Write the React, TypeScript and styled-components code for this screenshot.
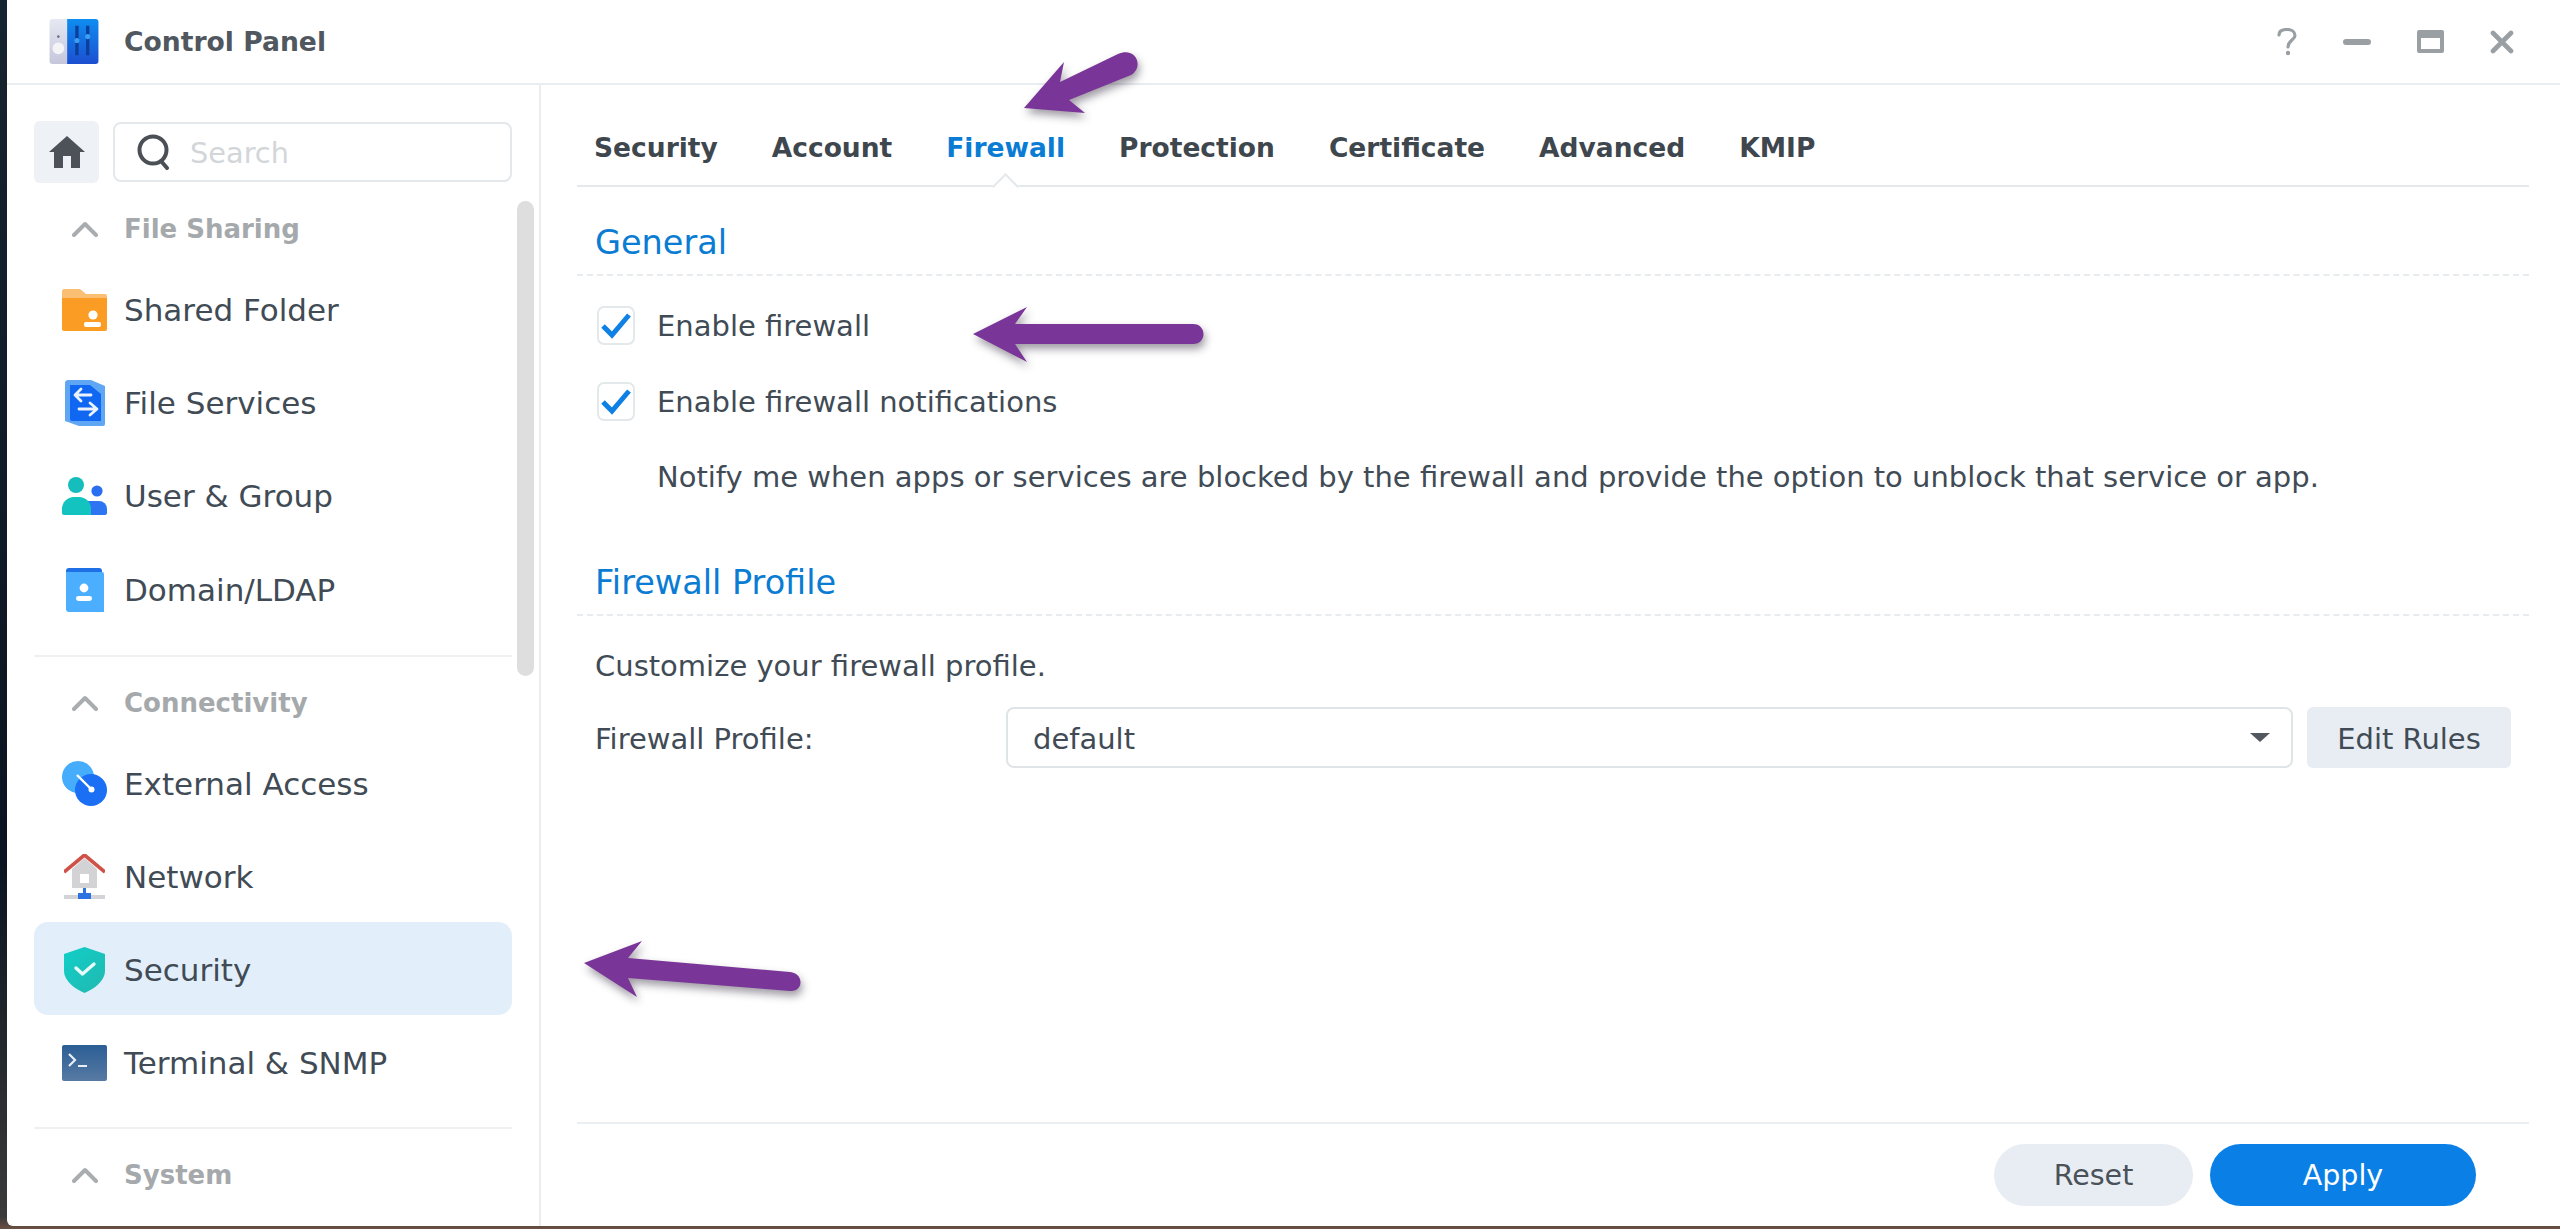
import React from 'react';
import styled, { createGlobalStyle } from 'styled-components';

const Global = createGlobalStyle`
  html, body { margin: 0; padding: 0; height: 100%; background: #0e1a26; overflow: hidden; }
  * { box-sizing: border-box; }
  #root { height: 100%; }
`;

const Desktop = styled.div`
  position: relative;
  width: 2560px;
  height: 1229px;
  overflow: hidden;
  padding: 0 0 3px 7px;
  background: linear-gradient(180deg, #16242f 0%, #0a1420 70%, #3a3a3a 99%, #6b5142 100%);
  font-family: "DejaVu Sans", "Noto Sans", sans-serif;
  color: #414b55;
`;

const Window = styled.div`
  width: 2553px;
  height: 1226px;
  background: #fff;
  border-bottom-left-radius: 6px;
  display: flex;
  flex-direction: column;
  overflow: hidden;
`;

const TitleBar = styled.header`
  flex: 0 0 85px;
  height: 85px;
  display: flex;
  align-items: center;
  padding-left: 42px;
  border-bottom: 2px solid #e9edef;
`;

const AppName = styled.h1`
  margin: 0 0 0 25px;
  font-size: 26.6px;
  font-weight: 700;
  color: #50575e;
  flex: 1;
`;

const Controls = styled.div`
  display: flex;
  align-items: center;
  gap: 46px;
  padding-right: 46px;
`;

const Body = styled.div`
  flex: 1;
  display: flex;
  min-height: 0;
`;

const Sidebar = styled.aside`
  position: relative;
  flex: 0 0 534px;
  border-right: 2px solid #e9edef;
  padding: 36px 27px 0 27px;
  overflow: hidden;
`;

const SearchRow = styled.div`
  display: flex;
  gap: 14px;
  height: 62px;
`;

const HomeButton = styled.button`
  width: 65px;
  height: 62px;
  border: 0;
  padding: 0;
  border-radius: 6px;
  background: #eef1f6;
  display: flex;
  align-items: center;
  justify-content: center;
`;

const SearchBox = styled.div`
  flex: 1;
  height: 60px;
  margin-top: 1px;
  border: 2px solid #e4e8ea;
  border-radius: 8px;
  display: flex;
  align-items: center;
  padding-left: 22px;
  gap: 19px;
`;

const Placeholder = styled.span`
  padding-top: 1px;
  font-size: 28.8px;
  color: #d3d6d9;
`;

const ScrollThumb = styled.div`
  position: absolute;
  left: 510px;
  top: 116px;
  width: 17px;
  height: 475px;
  border-radius: 9px;
  background: #dedede;
`;

const SectionHeader = styled.div<{ $after: number }>`
  display: flex;
  align-items: center;
  height: 90px;
  padding-top: 2px;
  margin-bottom: ${p => p.$after}px;
  font-size: 26px;
  font-weight: 700;
  color: #a5a9ac;
`;

const Chevron = styled.span`
  width: 26px;
  margin-left: 38px;
  margin-right: 26px;
  display: flex;
  justify-content: center;
`;

const Row = styled.div<{ $active?: boolean }>`
  height: 93.2px;
  display: flex;
  align-items: center;
  padding: 3px 0 0 28px;
  gap: 17px;
  border-radius: 14px;
  background: ${p => (p.$active ? '#e2effb' : 'transparent')};
  font-size: 31px;
  color: #414b55;
`;

const IconSlot = styled.span`
  flex: 0 0 45px;
  width: 45px;
  height: 45px;
  display: flex;
  align-items: center;
  justify-content: center;
`;

const SectionRule = styled.hr<{ $gap: number }>`
  margin: ${p => p.$gap}px 0 0;
  border: 0;
  border-top: 2px solid #eef0f2;
`;

const Main = styled.main`
  flex: 1;
  display: flex;
  flex-direction: column;
  padding: 0 31px 0 36px;
  min-width: 0;
`;

const Tabs = styled.nav`
  display: flex;
  gap: 54px;
  flex: 0 0 102px;
  padding: 24px 0 0 17px;
  border-bottom: 2px solid #e4e9ec;
`;

const Tab = styled.span<{ $active?: boolean }>`
  position: relative;
  display: flex;
  align-items: center;
  font-size: 26.5px;
  font-weight: 700;
  color: ${p => (p.$active ? '#0a7cd3' : '#3f474e')};
`;

const Notch = styled.i`
  position: absolute;
  left: 50%;
  bottom: -10.5px;
  width: 19px;
  height: 19px;
  margin-left: -9.5px;
  transform: rotate(45deg);
  background: #fff;
  border-left: 2px solid #e4e9ec;
  border-top: 2px solid #e4e9ec;
`;

const SectionTitle = styled.h2`
  margin: 0;
  flex: 0 0 89px;
  display: flex;
  align-items: flex-end;
  padding: 0 0 4px 18px;
  font-size: 33.5px;
  line-height: 54px;
  font-weight: 400;
  color: #0a7cd3;
  border-bottom: 2px dashed #e8ecee;
`;

const Check = styled.label<{ $top: number }>`
  display: flex;
  align-items: center;
  gap: 22px;
  height: 39px;
  margin: ${p => p.$top}px 0 0 20px;
  font-size: 29px;
  color: #414b55;
`;

const Box = styled.span`
  flex: 0 0 38px;
  width: 38px;
  height: 39px;
  border: 2px solid #e3e8ea;
  border-radius: 7px;
  display: flex;
  align-items: center;
  justify-content: center;
`;

const Hint = styled.p`
  margin: 37px 0 31px 80px;
  line-height: 38px;
  font-size: 29px;
  color: #414b55;
`;

const Plain = styled.p`
  margin: 31px 0 0 18px;
  line-height: 38px;
  font-size: 29px;
  color: #414b55;
`;

const ProfileRow = styled.div`
  display: flex;
  align-items: center;
  height: 61px;
  margin: 22px 18px 0 18px;
  gap: 14px;
  font-size: 29px;
`;

const ProfileLabel = styled.span`
  flex: 0 0 397px;
  padding-top: 3px;
  color: #414b55;
`;

const Select = styled.div`
  flex: 1;
  height: 61px;
  border: 2px solid #dfe5e7;
  border-radius: 8px;
  padding: 3px 26px 0 25px;
  display: flex;
  align-items: center;
  justify-content: space-between;
`;

const Caret = styled.i`
  width: 0;
  height: 0;
  margin: -3px -5px 0 0;
  border-left: 10px solid transparent;
  border-right: 10px solid transparent;
  border-top: 9px solid #53585f;
`;

const EditButton = styled.button`
  flex: 0 0 204px;
  height: 61px;
  border: 0;
  border-radius: 6px;
  padding: 3px 0 0;
  background: #e8edf3;
  font: inherit;
  color: #414b55;
`;

const Spacer = styled.div`
  flex: 1;
`;

const Footer = styled.footer`
  flex: 0 0 104px;
  display: flex;
  justify-content: flex-end;
  gap: 17px;
  padding: 20px 53px 0 0;
  border-top: 2px solid #eceff1;
`;

const Pill = styled.button<{ $primary?: boolean }>`
  height: 62px;
  width: ${p => (p.$primary ? '266px' : '199px')};
  border: 0;
  border-radius: 31px;
  background: ${p => (p.$primary ? '#0a7fe6' : '#e8edf3')};
  color: ${p => (p.$primary ? '#fff' : '#4a5159')};
  font-family: inherit;
  font-size: 28.5px;
`;

const ArrowSvg = styled.svg<{ $x: number; $y: number }>`
  position: absolute;
  left: ${p => p.$x}px;
  top: ${p => p.$y}px;
  pointer-events: none;
  overflow: visible;
  filter: drop-shadow(2px 5px 4px rgba(40, 30, 50, 0.45));
`;

const ChevronIcon = () => (
  <svg width="26" height="16" viewBox="0 0 26 16" fill="none" stroke="#a9adb0" strokeWidth="4" strokeLinecap="round" strokeLinejoin="round">
    <path d="M2 14 L13 3 L24 14" />
  </svg>
);

const LogoIcon = () => (
  <svg width="50" height="45" viewBox="0 0 50 46">
    <defs>
      <linearGradient id="lg1" x1="0" y1="0" x2="0" y2="1"><stop offset="0" stopColor="#e6e8f2" /><stop offset="1" stopColor="#c6c6dc" /></linearGradient>
      <linearGradient id="lg2" x1="0" y1="0" x2="0" y2="1"><stop offset="0" stopColor="#0f8df0" /><stop offset="1" stopColor="#1c4fd0" /></linearGradient>
    </defs>
    <path d="M3 0 H18 V46 H3 a3 3 0 0 1 -3 -3 V3 a3 3 0 0 1 3 -3z" fill="url(#lg1)" />
    <path d="M18 0 H47 a3 3 0 0 1 3 3 V43 a3 3 0 0 1 -3 3 H18z" fill="url(#lg2)" />
    <circle cx="9" cy="18" r="1.3" fill="#6a6f86" />
    <circle cx="9" cy="30" r="6" fill="#f3f3f8" />
    <path d="M28 7 V37 M39 7 V37" stroke="#0c3f9c" strokeWidth="3.4" />
    <circle cx="28" cy="22" r="2.6" fill="#3aa0f0" />
    <circle cx="39" cy="18" r="2.6" fill="#3aa0f0" />
  </svg>
);

const HomeIcon = () => (
  <svg width="36" height="32" viewBox="0 0 36 32" fill="#4c5258">
    <path d="M18 0 L36 16 H31 V32 H5 V16 H0z" />
    <rect x="14" y="20" width="8" height="12" fill="#eef1f6" />
  </svg>
);

const SearchIcon = () => (
  <svg width="34" height="36" viewBox="0 0 34 36" fill="none" stroke="#4a5056" strokeWidth="4" strokeLinecap="round">
    <circle cx="16" cy="16" r="13.5" />
    <path d="M24 27 L30 34" />
  </svg>
);

const FolderIcon = () => (
  <svg width="45" height="42" viewBox="0 0 45 42">
    <path d="M0 2 a2 2 0 0 1 2 -2 H18 L24 5 H43 a2 2 0 0 1 2 2 V12 H0z" fill="#fbbf73" />
    <path d="M0 9 H45 V40 a2 2 0 0 1 -2 2 H2 a2 2 0 0 1 -2 -2z" fill="#fb9d24" />
    <circle cx="31" cy="26" r="4.6" fill="#fff" />
    <rect x="22" y="33" width="17" height="5" rx="2" fill="#fff" />
  </svg>
);

const FileServicesIcon = () => (
  <svg width="40" height="46" viewBox="0 0 40 46">
    <path d="M2 0 H26 L40 6 V44 a2 2 0 0 1 -2 2 H14 L0 41 V2z" fill="#5fa7f5" />
    <path d="M5 5 H25 L36 14 V41 H7 a2 2 0 0 1 -2 -2z" fill="#1067f2" />
    <path d="M26 15 H11 M16 9 L10 15 L16 21 M14 29 H31 M25 23 L32 29 L25 35" stroke="#eaf3ff" strokeWidth="2.8" fill="none" strokeLinecap="round" strokeLinejoin="round" />
  </svg>
);

const UsersIcon = () => (
  <svg width="45" height="38" viewBox="0 0 45 38">
    <circle cx="35" cy="14" r="5.6" fill="#2b6ff0" />
    <path d="M26 24 h11 a8 8 0 0 1 8 8 v4 a2 2 0 0 1 -2 2 H26z" fill="#2d74f2" />
    <circle cx="14" cy="8" r="8" fill="#15bdbd" />
    <path d="M0 36 v-4 a12 12 0 0 1 12 -12 h5 a12 12 0 0 1 12 12 v6 H2 a2 2 0 0 1 -2 -2z" fill="#12c3bf" />
  </svg>
);

const DomainIcon = () => (
  <svg width="38" height="44" viewBox="0 0 38 44">
    <path d="M0 3 a3 3 0 0 1 3 -3 H33 a3 3 0 0 1 3 3 V6 H0z" fill="#1f6fe6" />
    <path d="M0 4 H36 a2 2 0 0 1 2 2 V44 H3 a3 3 0 0 1 -3 -3z" fill="#4caeff" />
    <circle cx="18" cy="20" r="4.4" fill="#fff" />
    <rect x="10" y="28" width="16" height="5" rx="2.4" fill="#fff" />
  </svg>
);

const ExternalIcon = () => (
  <svg width="45" height="45" viewBox="0 0 45 45">
    <circle cx="16" cy="16" r="16" fill="#45adfb" />
    <circle cx="29" cy="29" r="16" fill="#1a6ff4" />
    <path d="M15 14 L29 28" stroke="#fff" strokeWidth="2.4" />
    <circle cx="29.5" cy="28.5" r="3" fill="#fff" />
  </svg>
);

const NetworkIcon = () => (
  <svg width="41" height="46" viewBox="0 0 41 46">
    <path d="M8 15 L20.5 4 L33 15 V34 H8z" fill="#d3d3d5" />
    <path d="M0 18 L20.5 1 L41 18" fill="none" stroke="#cf5148" strokeWidth="3.6" />
    <rect x="16" y="20" width="9" height="9" fill="#fff" />
    <rect x="0" y="41" width="41" height="4" fill="#d3d4d8" />
    <path d="M19 34 H22 V39 H27 V45 H14 V39 H19z" fill="#2c72e0" />
  </svg>
);

const ShieldIcon = () => (
  <svg width="41" height="46" viewBox="0 0 41 46">
    <defs>
      <linearGradient id="sg" x1="0" y1="0" x2="1" y2="1"><stop offset="0" stopColor="#10cfc8" /><stop offset="1" stopColor="#22b8b0" /></linearGradient>
    </defs>
    <path d="M20.5 0 L41 7 V24 C41 34 30 42 20.5 46 C11 42 0 34 0 24 V7z" fill="url(#sg)" />
    <path d="M12 21 L18.5 27 L30 17" fill="none" stroke="#e8fafa" strokeWidth="3.4" strokeLinecap="round" strokeLinejoin="round" />
  </svg>
);

const TerminalIcon = () => (
  <svg width="45" height="36" viewBox="0 0 45 36">
    <defs>
      <linearGradient id="tg" x1="0" y1="0" x2="0" y2="1"><stop offset="0" stopColor="#2b5e95" /><stop offset="1" stopColor="#587aa3" /></linearGradient>
    </defs>
    <rect width="45" height="36" rx="2" fill="url(#tg)" />
    <path d="M7 9 L13 15 L7 21 M16 21 H25" fill="none" stroke="#e8eef5" strokeWidth="2.2" />
  </svg>
);

const QuestionIcon = () => (
  <svg width="20" height="28" viewBox="0 0 20 28" fill="none">
    <path d="M2 7 C2 3 5 1.5 10 1.5 C15 1.5 18 4 18 7.5 C18 12 11 12.5 11 19" stroke="#9a9fa3" strokeWidth="3.2" strokeLinecap="round" />
    <circle cx="11" cy="25" r="2.2" fill="#9a9fa3" />
  </svg>
);

const MinimizeIcon = () => (
  <svg width="28" height="6" viewBox="0 0 28 6"><rect width="28" height="6" rx="3" fill="#9a9fa3" /></svg>
);

const MaximizeIcon = () => (
  <svg width="27" height="23" viewBox="0 0 27 23">
    <rect width="27" height="23" rx="2" fill="#9a9fa3" />
    <rect x="4" y="8" width="19" height="11" fill="#fff" />
  </svg>
);

const CloseIcon = () => (
  <svg width="24" height="24" viewBox="0 0 24 24" stroke="#9a9fa3" strokeWidth="4.6" strokeLinecap="round">
    <path d="M3 3 L21 21 M21 3 L3 21" />
  </svg>
);

const CheckMark = () => (
  <svg width="32" height="28" viewBox="0 0 32 28" fill="none" stroke="#0f80e4" strokeWidth="5" strokeLinejoin="miter">
    <path d="M3 14 L12 23 L29 3" />
  </svg>
);

const Arrow = ({ d, x, y, w, h }: { d: string; x: number; y: number; w: number; h: number }) => (
  <ArrowSvg $x={x} $y={y} width={w} height={h} viewBox={`0 0 ${w} ${h}`}>
    <path d={d} fill="#7a3598" />
  </ArrowSvg>
);

const sections = [
  {
    title: 'File Sharing',
    after: -11,
    ruleGap: 20,
    items: [
      { label: 'Shared Folder', icon: <FolderIcon /> },
      { label: 'File Services', icon: <FileServicesIcon /> },
      { label: 'User & Group', icon: <UsersIcon /> },
      { label: 'Domain/LDAP', icon: <DomainIcon /> },
    ],
  },
  {
    title: 'Connectivity',
    after: -11,
    ruleGap: 18,
    items: [
      { label: 'External Access', icon: <ExternalIcon /> },
      { label: 'Network', icon: <NetworkIcon /> },
      { label: 'Security', icon: <ShieldIcon />, active: true },
      { label: 'Terminal & SNMP', icon: <TerminalIcon /> },
    ],
  },
];

const tabs = ['Security', 'Account', 'Firewall', 'Protection', 'Certificate', 'Advanced', 'KMIP'];

export default function App() {
  return (
    <Desktop>
      <Global />
      <Window>
        <TitleBar>
          <LogoIcon />
          <AppName>Control Panel</AppName>
          <Controls>
            <QuestionIcon />
            <MinimizeIcon />
            <MaximizeIcon />
            <CloseIcon />
          </Controls>
        </TitleBar>
        <Body>
          <Sidebar>
            <SearchRow>
              <HomeButton aria-label="Home"><HomeIcon /></HomeButton>
              <SearchBox>
                <SearchIcon />
                <Placeholder>Search</Placeholder>
              </SearchBox>
            </SearchRow>
            <ScrollThumb />
            {sections.map(s => (
              <section key={s.title}>
                <SectionHeader $after={s.after}>
                  <Chevron><ChevronIcon /></Chevron>
                  {s.title}
                </SectionHeader>
                {s.items.map(it => (
                  <Row key={it.label} $active={it.active}>
                    <IconSlot>{it.icon}</IconSlot>
                    {it.label}
                  </Row>
                ))}
                <SectionRule $gap={s.ruleGap} />
              </section>
            ))}
            <SectionHeader $after={0}>
              <Chevron><ChevronIcon /></Chevron>
              System
            </SectionHeader>
          </Sidebar>
          <Main>
            <Tabs>
              {tabs.map(t => (
                <Tab key={t} $active={t === 'Firewall'}>
                  {t}
                  {t === 'Firewall' && <Notch />}
                </Tab>
              ))}
            </Tabs>
            <SectionTitle>General</SectionTitle>
            <Check $top={30}><Box><CheckMark /></Box>Enable firewall</Check>
            <Check $top={37}><Box><CheckMark /></Box>Enable firewall notifications</Check>
            <Hint>Notify me when apps or services are blocked by the firewall and provide the option to unblock that service or app.</Hint>
            <SectionTitle>Firewall Profile</SectionTitle>
            <Plain>Customize your firewall profile.</Plain>
            <ProfileRow>
              <ProfileLabel>Firewall Profile:</ProfileLabel>
              <Select>default<Caret /></Select>
              <EditButton>Edit Rules</EditButton>
            </ProfileRow>
            <Spacer />
            <Footer>
              <Pill>Reset</Pill>
              <Pill $primary>Apply</Pill>
            </Footer>
          </Main>
        </Body>
      </Window>
      <Arrow x={1015} y={50} w={130} h={80} d="M9 58 L49 12 L45 32 L103 4 C120 -4 130 16 116 25 L54 50 L70 63z" />
      <Arrow x={965} y={300} w={250} h={70} d="M8 34 L62 7 L50 24 L228 24 C242 24 242 44 228 44 L50 44 L62 62z" />
      <Arrow x={578} y={935} w={230} h={70} d="M6 28 L64 6 L50 23 L212 37 C226 38 226 57 212 56 L50 43 L59 62z" />
    </Desktop>
  );
}
